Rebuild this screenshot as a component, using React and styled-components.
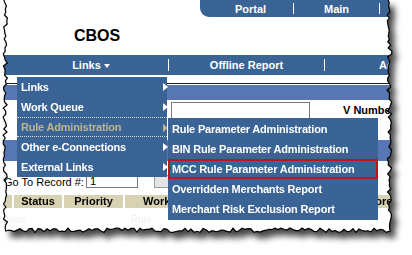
import React from 'react';
import styled, { createGlobalStyle } from 'styled-components';

const BLUE = '#3b6496';
const LIGHT_BLUE = '#5677b3';
const BEIGE = '#d6d2b2';

const GlobalStyle = createGlobalStyle`
    html, body {
        margin: 0;
        padding: 0;
        background: #fff;
    }
    body {
        font-family: "Liberation Sans", Arial, sans-serif;
    }
`;

/**
 * Pseudo random value in [0, 1) for a given seed, so the torn edge is the same every run.
 */
const noise = (seed) => {
    const v = Math.sin(seed * 12.9898 + 78.233) * 43758.5453;
    return v - Math.floor(v);
};

/**
 * Points of the torn paper edge: left side down, bottom across, right side up.
 */
const buildTornEdge = () => {
    const pts = [];
    for (let y = 0; y <= 231; y += 3) pts.push([3 + noise(y) * 4.5, y]);
    for (let x = 8; x <= 388; x += 3) pts.push([x, 228 + noise(x + 500) * 4.5]);
    for (let y = 231; y >= 0; y -= 3) pts.push([387 + noise(y + 1000) * 5, y]);
    return pts;
};

const TORN = buildTornEdge();
const TORN_CLIP = `polygon(${[[TORN[0][0], -2], ...TORN, [TORN[TORN.length - 1][0], -2]]
    .map(([x, y]) => `${x.toFixed(1)}px ${y.toFixed(1)}px`)
    .join(', ')})`;
const TORN_LINE = TORN.map(([x, y]) => `${x.toFixed(1)},${y.toFixed(1)}`).join(' ');

const Stage = styled.div`
    width: 412px;
    height: 255px;
    overflow: hidden;
    background: #fff;
`;

const Paper = styled.div`
    position: relative;
    width: 412px;
    height: 255px;
    filter: drop-shadow(5px 6px 3px rgba(0, 0, 0, 0.72));
`;

const Sheet = styled.div`
    position: relative;
    width: 412px;
    height: 255px;
    background: #fff;
    clip-path: ${TORN_CLIP};
    font-family: "Liberation Sans", Arial, sans-serif;
    font-size: 11px;
    color: #000;
`;

const EdgeLine = styled.svg`
    position: absolute;
    left: 0;
    top: 0;
    pointer-events: none;
`;

const TopStrip = styled.div`
    display: flex;
    height: 17px;
`;

const Tab = styled.div`
    margin-left: 200px;
    flex: 1;
    display: flex;
    align-items: center;
    padding-left: 8px;
    background: ${BLUE};
    border-bottom-left-radius: 9px;
`;

const TabLink = styled.span`
    width: 85px;
    text-align: center;
    color: #fff;
    font-weight: bold;
    font-size: 11px;
`;

const Sep = styled.span`
    width: 1px;
    height: ${(p) => p.h || 11}px;
    background: #fff;
    flex: none;
`;

const LogoRow = styled.div`
    height: 38px;
    display: flex;
    align-items: center;
    padding-left: 74px;
    font-size: 16px;
    font-weight: bold;
`;

const NavBar = styled.div`
    height: 20px;
    display: flex;
    align-items: center;
    background: ${BLUE};
`;

const NavItem = styled.div`
    width: ${(p) => p.w}px;
    margin-left: ${(p) => p.ml || 0}px;
    display: flex;
    justify-content: ${(p) => (p.start ? 'flex-start' : 'center')};
    padding-left: ${(p) => p.pl || 0}px;
    box-sizing: border-box;
    align-items: center;
    gap: 3px;
    color: #fff;
    font-weight: bold;
    font-size: 11px;
    white-space: nowrap;
    flex: none;
`;

const Caret = styled.span`
    width: 0;
    height: 0;
    border-left: 3.5px solid transparent;
    border-right: 3.5px solid transparent;
    border-top: 4px solid #fff;
    margin-top: 1px;
`;

const BlueBand = styled.div`
    margin-top: ${(p) => p.mt || 0}px;
    height: ${(p) => p.h}px;
    background: ${LIGHT_BLUE};
    border-top: ${(p) => (p.ruled ? '1px solid #1c1c1c' : 'none')};
    box-shadow: ${(p) => (p.ruled ? 'inset 0 1px 0 #fff' : 'none')};
`;

const SearchRow = styled.div`
    height: 18px;
    margin-top: 1px;
    display: flex;
    align-items: center;
    padding-left: 171px;
    gap: 33px;
    font-weight: bold;
    white-space: nowrap;
`;

const Field = styled.div`
    width: ${(p) => p.w}px;
    height: ${(p) => p.h}px;
    box-sizing: border-box;
    border: 1px solid #7a7a7a;
    background: #fff;
    padding-left: 3px;
    font-size: 11px;
    line-height: ${(p) => p.h - 2}px;
    flex: none;
`;

const GotoRow = styled.div`
    margin-top: 14px;
    height: 13px;
    display: flex;
    align-items: center;
    padding-left: 4px;
    white-space: nowrap;
`;

const GotoLabel = styled.span`
    width: 82px;
    font-size: 11px;
    flex: none;
`;

const GrayButton = styled.div`
    margin-left: 16px;
    width: 50px;
    height: 13px;
    box-sizing: border-box;
    border: 1px solid #9a9a9a;
    background: #e4e4e4;
    flex: none;
`;

const HeaderRow = styled.div`
    margin-top: 7px;
    height: 13px;
    display: flex;
    gap: 2px;
`;

const HeadCell = styled.div`
    width: ${(p) => p.w}px;
    flex: none;
    background: ${BEIGE};
    font-weight: bold;
    font-size: 11px;
    line-height: 13px;
    text-align: ${(p) => p.align || 'center'};
    padding-left: ${(p) => p.pl || 0}px;
    box-sizing: border-box;
    overflow: hidden;
    white-space: nowrap;
`;

const DataRow = styled.div`
    margin-top: 6px;
    height: 12px;
    display: flex;
    gap: 2px;
    color: #f1f1f1;
    font-size: 10px;
`;

const DataCell = styled.div`
    width: ${(p) => p.w}px;
    flex: none;
    padding-left: 6px;
    box-sizing: border-box;
`;

const Menu = styled.div`
    position: absolute;
    left: ${(p) => p.x}px;
    top: ${(p) => p.y}px;
    width: ${(p) => p.w}px;
    background: ${BLUE};
    padding: ${(p) => p.pad || 0}px 0;
`;

const MenuItem = styled.div`
    position: relative;
    height: 20px;
    box-sizing: border-box;
    display: flex;
    align-items: center;
    padding-left: 4px;
    color: ${(p) => (p.active ? '#bdb590' : '#fff')};
    font-weight: bold;
    font-size: 11px;
    letter-spacing: -0.2px;
    white-space: nowrap;
    border-top: ${(p) => (p.active ? '1px dotted #d8d8d8' : 'none')};
    border-bottom: ${(p) => (p.active ? '1px dotted #d8d8d8' : 'none')};
    box-shadow: ${(p) => (p.marked ? 'inset 0 0 0 2px #c3121a' : 'none')};
`;

const SubArrow = styled.span`
    position: absolute;
    right: -1px;
    top: 6px;
    width: 0;
    height: 0;
    border-top: 4px solid transparent;
    border-bottom: 4px solid transparent;
    border-left: 5px solid ${(p) => (p.active ? '#bdb590' : '#fff')};
`;

const MAIN_MENU = ['Links', 'Work Queue', 'Rule Administration', 'Other e-Connections', 'External Links'];

const RULE_MENU = [
    'Rule Parameter Administration',
    'BIN Rule Parameter Administration',
    'MCC Rule Parameter Administration',
    'Overridden Merchants Report',
    'Merchant Risk Exclusion Report',
];

export default function App() {
    return (
        <Stage>
            <GlobalStyle />
            <Paper>
                <Sheet>
                    <TopStrip>
                        <Tab>
                            <TabLink>Portal</TabLink>
                            <Sep />
                            <TabLink>Main</TabLink>
                            <Sep />
                        </Tab>
                    </TopStrip>

                    <LogoRow>CBOS</LogoRow>

                    <NavBar>
                        <NavItem w={154} ml={14}>
                            Links <Caret />
                        </NavItem>
                        <Sep h={12} />
                        <NavItem w={155}>Offline Report</NavItem>
                        <Sep h={12} />
                        <NavItem w={70} start pl={54}>Ad</NavItem>
                    </NavBar>

                    <BlueBand mt={8} h={16} ruled />

                    <SearchRow>
                        <Field w={139} h={17} />
                        <span>V Number</span>
                    </SearchRow>

                    <BlueBand mt={21} h={21} />

                    <GotoRow>
                        <GotoLabel>Go To Record #:</GotoLabel>
                        <Field w={52} h={13}>1</Field>
                        <GrayButton />
                    </GotoRow>

                    <HeaderRow>
                        <HeadCell w={12} />
                        <HeadCell w={48}>Status</HeadCell>
                        <HeadCell w={59}>Priority</HeadCell>
                        <HeadCell w={80} align="left" pl={18}>Work</HeadCell>
                        <HeadCell w={80} />
                        <HeadCell w={74} />
                        <HeadCell w={40} align="left" pl={1}>More</HeadCell>
                    </HeaderRow>

                    <DataRow>
                        <DataCell w={62}>New</DataCell>
                        <DataCell w={59} />
                        <DataCell w={80}>Rule</DataCell>
                    </DataRow>

                    <Menu x={17} y={77} w={150}>
                        {MAIN_MENU.map((label) => (
                            <MenuItem key={label} active={label === 'Rule Administration'}>
                                {label}
                                <SubArrow active={label === 'Rule Administration'} />
                            </MenuItem>
                        ))}
                    </Menu>

                    <Menu x={168} y={118} w={210} pad={1}>
                        {RULE_MENU.map((label) => (
                            <MenuItem key={label} marked={label.startsWith('MCC')}>
                                {label}
                            </MenuItem>
                        ))}
                    </Menu>
                </Sheet>
                <EdgeLine width="412" height="255" viewBox="0 0 412 255">
                    <polyline points={TORN_LINE} fill="none" stroke="#000" strokeWidth="1.2" />
                </EdgeLine>
            </Paper>
        </Stage>
    );
}
